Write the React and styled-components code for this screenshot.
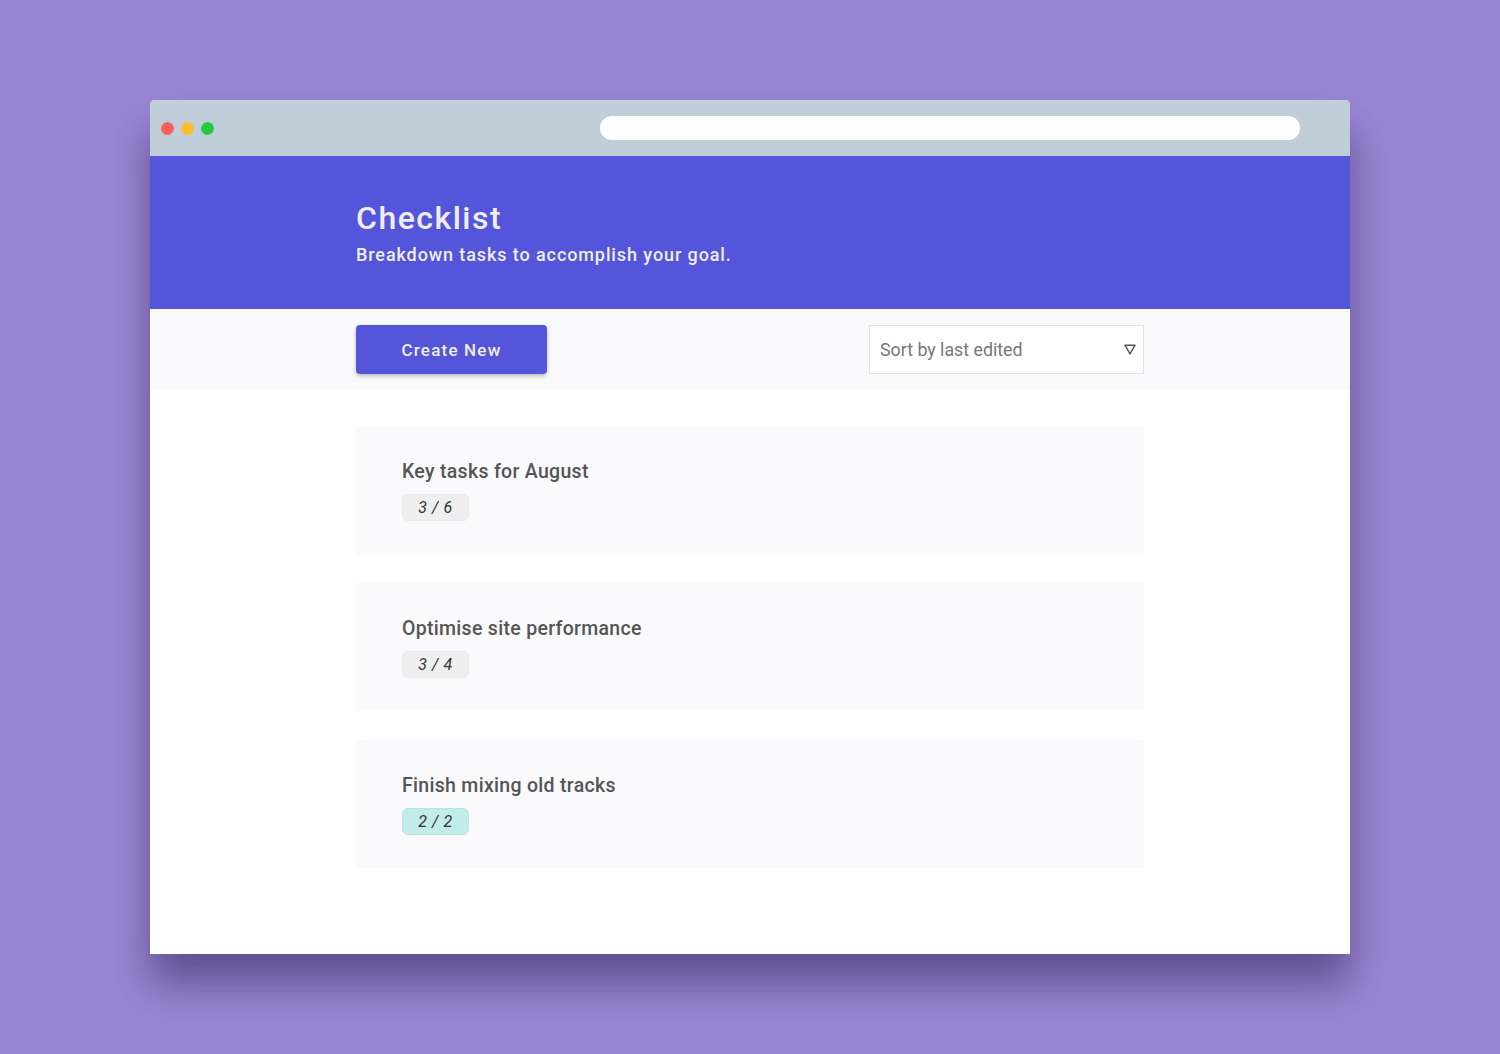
import React from "react";
import styled, { createGlobalStyle } from "styled-components";

const GlobalStyle = createGlobalStyle`
  html, body {
    margin: 0;
    padding: 0;
    background: #9a86d4;
    font-family: Roboto, "Liberation Sans", sans-serif;
  }
  * { box-sizing: border-box; }
`;

const Page = styled.div`
  min-height: 1054px;
  padding-top: 100px;
  display: flex;
  justify-content: center;
  align-items: flex-start;
`;

const Window = styled.div`
  width: 1200px;
  height: 854px;
  background: #ffffff;
  border-radius: 5px 5px 0 0;
  box-shadow: 0 30px 40px rgba(40, 25, 80, 0.5);
  display: flex;
  flex-direction: column;
  overflow: hidden;
`;

const TitleBar = styled.div`
  height: 56px;
  flex-shrink: 0;
  background: #c0ceda;
  display: flex;
  align-items: center;
  padding: 0 50px 0 11px;
`;

const Dots = styled.div`
  display: flex;
  gap: 7px;
`;

const Dot = styled.span`
  width: 13px;
  height: 13px;
  border-radius: 50%;
  background: ${(p) => p.color};
`;

const UrlBar = styled.div`
  margin-left: auto;
  width: 700px;
  height: 24px;
  border-radius: 12px;
  background: #ffffff;
`;

const Header = styled.header`
  height: 153px;
  flex-shrink: 0;
  background: #5555dc;
  color: #eeeeee;
  padding: 43px 0 0 206px;

  h1 {
    margin: 0;
    font-size: 32px;
    font-weight: 500;
    letter-spacing: 1.5px;
    line-height: 38px;
  }
  p {
    margin: 7px 0 0;
    font-size: 18px;
    font-weight: 500;
    letter-spacing: 0.9px;
    line-height: 22px;
  }
`;

const Toolbar = styled.div`
  background: #fafafc;
  padding: 16px 0;
  flex-shrink: 0;
`;

const Inner = styled.div`
  width: 788px;
  margin: 0 auto;
  display: flex;
  justify-content: space-between;
  align-items: center;
`;

const CreateButton = styled.button`
  width: 191px;
  height: 49px;
  border: none;
  border-radius: 4px;
  background: #5555d9;
  color: #eeeeee;
  font-family: Roboto, "Liberation Sans", sans-serif;
  font-size: 17px;
  font-weight: 500;
  letter-spacing: 1.2px;
  box-shadow: 0 2px 4px rgba(0, 0, 0, 0.25);
  cursor: pointer;
`;

const Select = styled.div`
  width: 275px;
  height: 49px;
  background: #ffffff;
  border: 1px solid #e2e2e6;
  display: flex;
  align-items: center;
  justify-content: space-between;
  padding: 0 7px 0 10px;
  color: #777777;
  font-size: 17.8px;
`;

const List = styled.div`
  width: 788px;
  margin: 36px auto 0;
  display: flex;
  flex-direction: column;
  gap: 29px;
`;

const Card = styled.div`
  height: 128px;
  background: #fafafc;
  padding: 33px 46px 0;
`;

const CardTitle = styled.div`
  font-size: 19.5px;
  font-weight: 500;
  color: #555555;
  letter-spacing: 0.3px;
  line-height: 26px;
`;

const Badge = styled.span`
  display: inline-flex;
  align-items: center;
  justify-content: center;
  margin-top: 9px;
  width: 67px;
  height: 27px;
  border-radius: 6px;
  background: ${(p) => (p.done ? "#c2ecea" : "#efefef")};
  border: 1px solid ${(p) => (p.done ? "#b8e4e2" : "#e8e8e8")};
  color: #333333;
  font-size: 16px;
  font-style: italic;
  letter-spacing: 0.6px;
`;

const lists = [
  { title: "Key tasks for August", done: 3, total: 6 },
  { title: "Optimise site performance", done: 3, total: 4 },
  { title: "Finish mixing old tracks", done: 2, total: 2 },
];

export default function App() {
  return (
    <>
      <GlobalStyle />
      <Page>
        <Window>
          <TitleBar>
            <Dots>
              <Dot color="#fe5f57" />
              <Dot color="#febc2e" />
              <Dot color="#28c840" />
            </Dots>
            <UrlBar />
          </TitleBar>
          <Header>
            <h1>Checklist</h1>
            <p>Breakdown tasks to accomplish your goal.</p>
          </Header>
          <Toolbar>
            <Inner>
              <CreateButton>Create New</CreateButton>
              <Select>
                <span>Sort by last edited</span>
                <svg width="12" height="11" viewBox="0 0 12 11">
                  <path d="M1 1.2 H11 L6 10 Z" fill="none" stroke="#555" strokeWidth="1.5" strokeLinejoin="round" />
                </svg>
              </Select>
            </Inner>
          </Toolbar>
          <List>
            {lists.map((l) => (
              <Card key={l.title}>
                <CardTitle>{l.title}</CardTitle>
                <Badge done={l.done === l.total}>
                  {l.done} / {l.total}
                </Badge>
              </Card>
            ))}
          </List>
        </Window>
      </Page>
    </>
  );
}
